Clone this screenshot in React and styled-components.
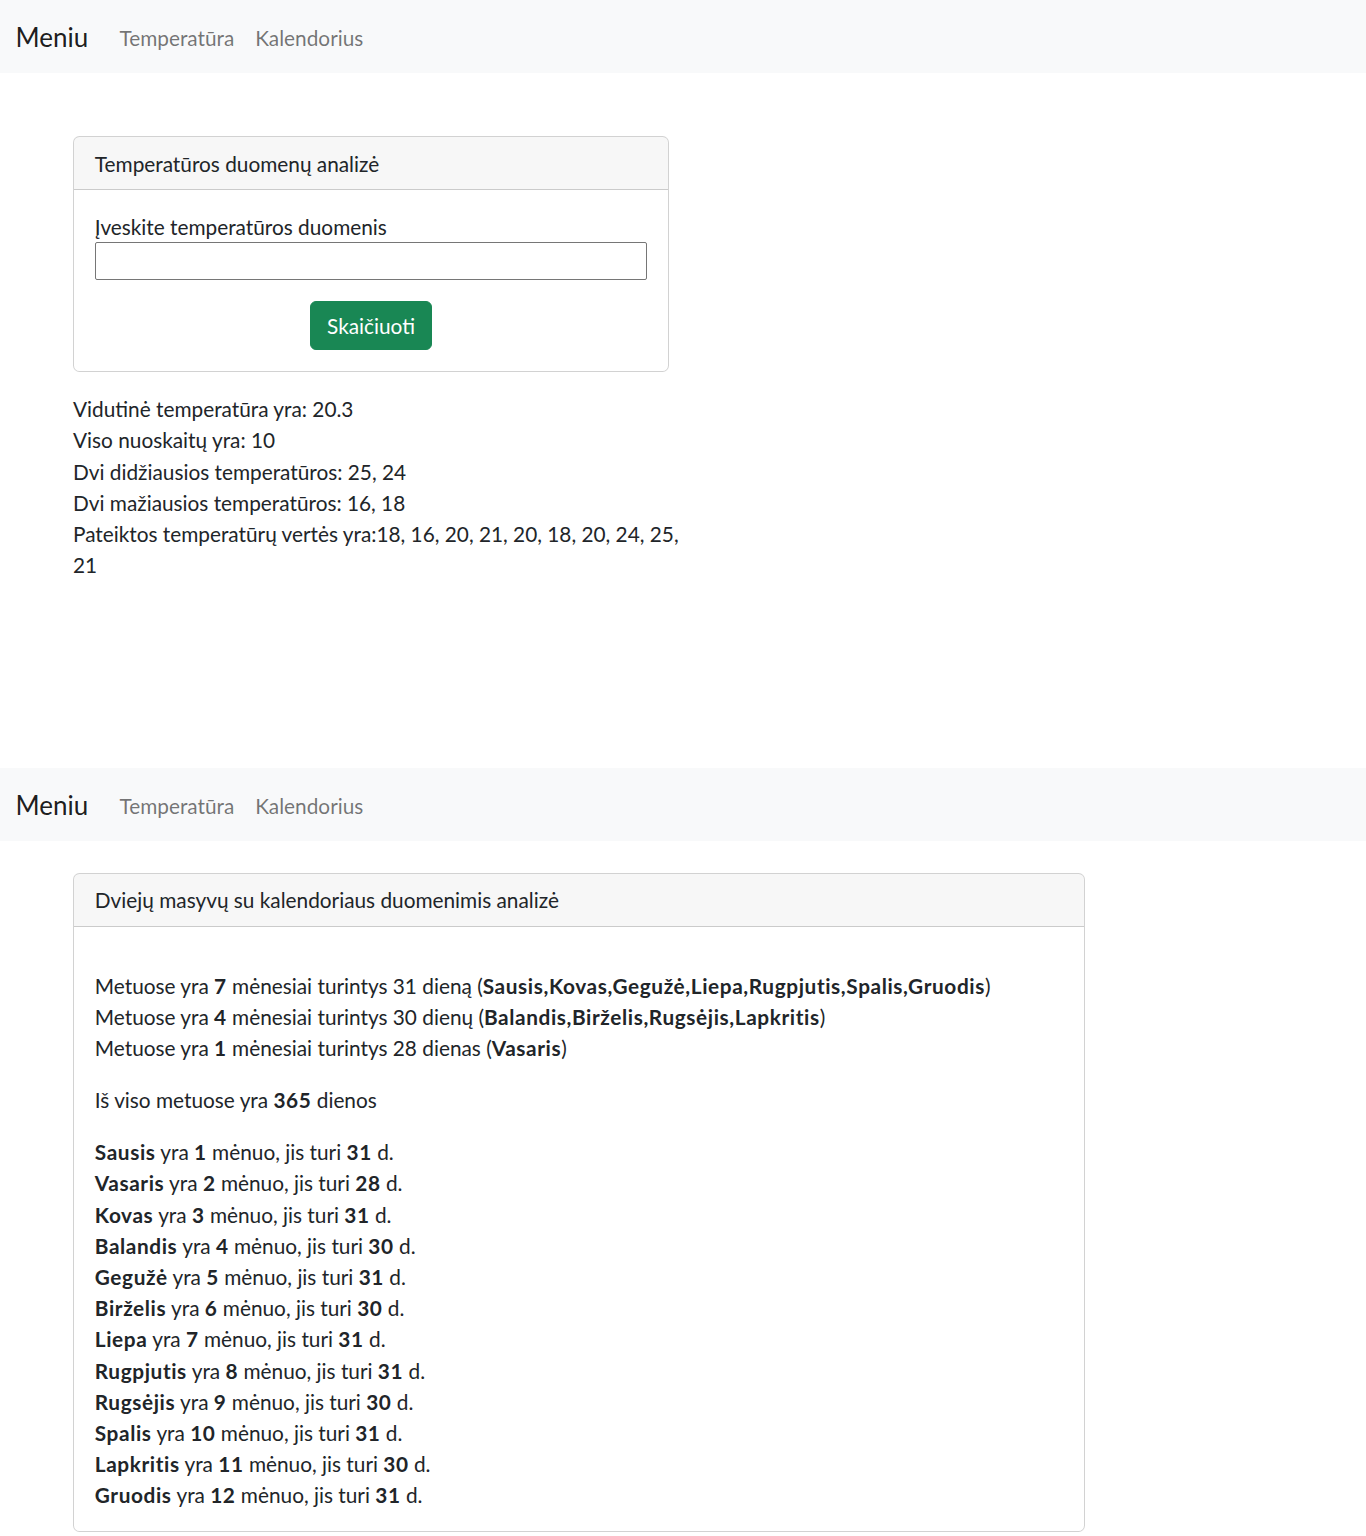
import React from 'react'
import styled, { createGlobalStyle } from 'styled-components'

const GlobalStyle = createGlobalStyle`
    html {
        font-size: 20.8px;
    }
    body {
        margin: 0;
        font-family: Lato, "Noto Sans", "Liberation Sans", sans-serif;
        font-size: 20.8px;
        line-height: 1.5;
        color: #212529;
        background: #fff;
    }
    * {
        box-sizing: border-box;
    }
`

const Navbar = styled.nav`
    background-color: #f8f9fa;
    display: flex;
    align-items: center;
    padding: 10.4px 15.6px;
`

const Brand = styled.a`
    color: rgba(0, 0, 0, 0.9);
    font-size: 26px;
    line-height: 39px;
    padding: 7.5px 0 5.5px;
    margin-right: 20.8px;
    text-decoration: none;
`

const NavLink = styled.a`
    color: rgba(0, 0, 0, 0.55);
    padding: 11.5px 10.4px 9.3px;
    text-decoration: none;
`

const Page = styled.div`
    min-height: ${props => props.minHeight || 0}px;
`

const Container = styled.div`
    width: 1248px;
    margin: 0 auto;
    padding: 0 14px;
    margin-top: ${props => props.top}px;
`

const Col = styled.div`
    width: calc(${props => props.span} / 12 * 1248px - 28px);
`

const Card = styled.div`
    border: 1px solid rgba(0, 0, 0, 0.175);
    border-radius: 6.5px;
    overflow: hidden;
    background: #fff;
`

const CardHeader = styled.div`
    background-color: rgba(0, 0, 0, 0.03);
    border-bottom: 1px solid rgba(0, 0, 0, 0.175);
    padding: 10.4px 20.8px;
`

const CardBody = styled.div`
    padding: 20.8px;
`

const Label = styled.label`
    display: block;
`

const Input = styled.input`
    display: block;
    width: 100%;
    height: 38px;
    border: 1px solid #767676;
    border-radius: 2px;
    font: inherit;
`

const ButtonRow = styled.div`
    text-align: center;
    margin-top: 20.8px;
`

const Button = styled.button`
    background-color: #198754;
    border: 1px solid #198754;
    border-radius: 6px;
    color: #fff;
    font: inherit;
    line-height: 31.2px;
    padding: 7.8px 15.6px;
    cursor: pointer;
`

const Results = styled.div`
    margin-top: 21.5px;
    width: 612px;
`

const Para = styled.p`
    margin: 0 0 ${props => (props.last ? 0 : 20.8)}px;
`

const Spacer = styled.p`
    margin: 0;
    height: 22.4px;
`

const Line = styled.div``

const Strong = styled.b`
    font-weight: 700;
    letter-spacing: 0.6px;
`

const Menu = () => (
    <Navbar>
        <Brand href="#">Meniu</Brand>
        <NavLink href="#">Temperatūra</NavLink>
        <NavLink href="#">Kalendorius</NavLink>
    </Navbar>
)

const months = [
    ['Sausis', 31], ['Vasaris', 28], ['Kovas', 31], ['Balandis', 30],
    ['Gegužė', 31], ['Birželis', 30], ['Liepa', 31], ['Rugpjutis', 31],
    ['Rugsėjis', 30], ['Spalis', 31], ['Lapkritis', 30], ['Gruodis', 31],
]

const Temperature = () => (
    <Page minHeight={768}>
        <Menu />
        <Container top={63.5}>
            <Col span={6}>
                <Card>
                    <CardHeader>Temperatūros duomenų analizė</CardHeader>
                    <CardBody>
                        <Label htmlFor="temps">Įveskite temperatūros duomenis</Label>
                        <Input id="temps" type="text" />
                        <ButtonRow>
                            <Button>Skaičiuoti</Button>
                        </ButtonRow>
                    </CardBody>
                </Card>
                <Results>
                    <Line>Vidutinė temperatūra yra: 20.3</Line>
                    <Line>Viso nuoskaitų yra: 10</Line>
                    <Line>Dvi didžiausios temperatūros: 25, 24</Line>
                    <Line>Dvi mažiausios temperatūros: 16, 18</Line>
                    <Line>Pateiktos temperatūrų vertės yra:18, 16, 20, 21, 20, 18, 20, 24, 25, 21</Line>
                </Results>
            </Col>
        </Container>
    </Page>
)

const Calendar = () => (
    <Page>
        <Menu />
        <Container top={32}>
            <Col span={10}>
                <Card>
                    <CardHeader>Dviejų masyvų su kalendoriaus duomenimis analizė</CardHeader>
                    <CardBody>
                        <Spacer />
                        <Para>
                            <Line>Metuose yra <Strong>7</Strong> mėnesiai turintys 31 dieną (<Strong>Sausis,Kovas,Gegužė,Liepa,Rugpjutis,Spalis,Gruodis</Strong>)</Line>
                            <Line>Metuose yra <Strong>4</Strong> mėnesiai turintys 30 dienų (<Strong>Balandis,Birželis,Rugsėjis,Lapkritis</Strong>)</Line>
                            <Line>Metuose yra <Strong>1</Strong> mėnesiai turintys 28 dienas (<Strong>Vasaris</Strong>)</Line>
                        </Para>
                        <Para>Iš viso metuose yra <Strong>365</Strong> dienos</Para>
                        <Para last>
                            {months.map(([name, days], i) => (
                                <Line key={name}>
                                    <Strong>{name}</Strong> yra <Strong>{i + 1}</Strong> mėnuo, jis turi <Strong>{days}</Strong> d.
                                </Line>
                            ))}
                        </Para>
                    </CardBody>
                </Card>
            </Col>
        </Container>
    </Page>
)

const App = () => (
    <>
        <GlobalStyle />
        <Temperature />
        <Calendar />
    </>
)

export default App
